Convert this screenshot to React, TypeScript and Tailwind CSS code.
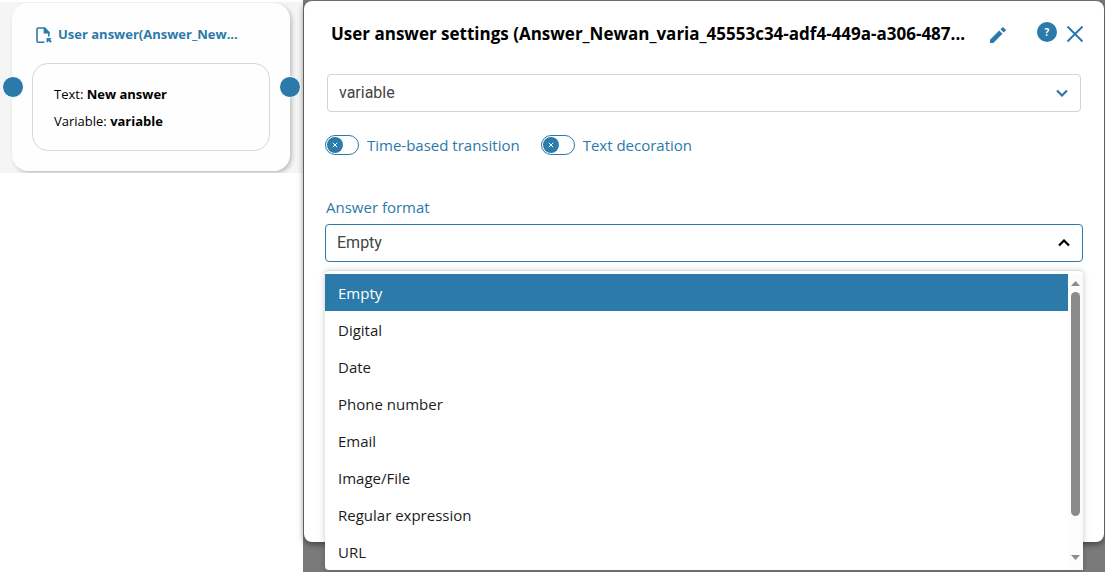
import { useState } from "react";

const FORMATS = [
  "Empty",
  "Digital",
  "Date",
  "Phone number",
  "Email",
  "Image/File",
  "Regular expression",
  "URL",
];

function Toggle({ label }: { label: string }) {
  const [on, setOn] = useState(false);

  return (
    <label className="flex cursor-pointer items-center gap-2 text-[15px] leading-5 text-[#2b7aa9]">
      <span className="relative flex h-5 w-[34px] items-center rounded-full border border-[#2b7aa9] bg-white px-px">
        <input
          type="checkbox"
          checked={on}
          onChange={(e) => setOn(e.target.checked)}
          className="absolute inset-0 cursor-pointer appearance-none"
        />
        <span
          className={
            on
              ? "pointer-events-none ml-auto flex size-4 items-center justify-center rounded-full bg-[#2b7aa9]"
              : "pointer-events-none flex size-4 items-center justify-center rounded-full bg-[#2b7aa9]"
          }
        >
          <svg width="6" height="6" viewBox="0 0 6 6" fill="none" stroke="#fff">
            <path d={on ? "M.5 3l2 2 3-4" : "M.8.8l4.400 4.400M5.200.8L.8 5.200"} />
          </svg>
        </span>
      </span>
      {label}
    </label>
  );
}

function AnswerNode() {
  return (
    <div className="relative mr-[13px] ml-3 h-[168px] rounded-2xl bg-[#fefefe] px-5 pt-5 shadow-[2px_2px_4px_rgba(0,0,0,0.22)]">
      <div className="flex h-6 items-center gap-1.5 pl-1">
        <svg width="16" height="17" viewBox="0 0 16 17" fill="none" className="shrink-0">
          <path
            d="M8.500 15.200H2.200a1.200 1.200 0 0 1-1.200-1.200V2.200A1.200 1.200 0 0 1 2.200 1h6.300l4.300 4.300v4.200"
            stroke="#2b7aa9"
            strokeWidth="1.6"
          />
          <path d="M7.600.6h1.200l4.800 5v1H7.600z" fill="#2b7aa9" />
          <path d="M10.600 11h4.400v1.300h-1.200l1.900 2.300-1.200 1.200-2.300-2v1.400h-1.600z" fill="#2b7aa9" />
        </svg>
        <h2 className="text-[13px] font-bold whitespace-nowrap text-[#2b7aa9]">
          User answer(Answer_New...
        </h2>
      </div>

      <div className="mt-4 rounded-2xl border border-[#d6d6d6] px-[21px] py-4 text-[13px] text-black">
        <p className="leading-7">
          Text: <b>New answer</b>
        </p>
        <p className="leading-[26px]">
          Variable: <b>variable</b>
        </p>
      </div>

      {/* Connection points */}
      <span className="absolute top-[73px] -left-[10px] size-[22px] rounded-full border border-white bg-[#2b7aa9]" />
      <span className="absolute top-[73px] -right-[11px] size-[22px] rounded-full border border-white bg-[#2b7aa9]" />
    </div>
  );
}

function FormatMenu({ value, onSelect }: { value: string; onSelect: (v: string) => void }) {
  return (
    <div className="absolute inset-x-0 top-full mt-2 flex rounded border-t border-[#dddddd] bg-white pt-[3px] shadow-[0_1px_6px_rgba(0,0,0,0.22)]">
      <ul role="listbox" aria-label="Answer format" className="min-w-0 flex-1">
        {FORMATS.map((f) => (
          <li key={f} role="option" aria-selected={f === value}>
            <button
              type="button"
              onClick={() => onSelect(f)}
              className={
                f === value
                  ? "block h-[37px] w-full bg-[#2b7aa9] px-[13px] pt-0.5 text-left text-[15px] text-white"
                  : "block h-[37px] w-full px-[13px] pt-0.5 text-left text-[15px] text-[#1c1c1c]"
              }
            >
              {f}
            </button>
          </li>
        ))}
      </ul>

      {/* Scrollbar */}
      <div className="flex w-[15px] flex-col items-center gap-1 bg-[#fcfcfc] pt-1.5 pb-2">
        <svg width="9" height="8" viewBox="0 0 9 8" fill="#8b8b8b">
          <path d="M4.500 1L9 6H0z" />
        </svg>
        <div className="h-56 w-[9px] rounded-full bg-[#8b8b8b]" />
        <svg width="9" height="8" viewBox="0 0 9 8" fill="#8b8b8b" className="mt-auto">
          <path d="M0 1h9L4.500 6z" />
        </svg>
      </div>
    </div>
  );
}

export default function App() {
  const [format, setFormat] = useState("Empty");
  const [open, setOpen] = useState(true);

  return (
    <div className="flex min-h-screen bg-white font-['Open_Sans','Noto_Sans',sans-serif]">
      {/* Canvas */}
      <div className="w-[303px] shrink-0">
        <div className="overflow-hidden border-t-2 border-white bg-[#f5f5f5] pt-px pb-0.5">
          <AnswerNode />
        </div>
      </div>

      {/* Settings dialog */}
      <div className="flex min-w-0 flex-1 bg-[#7a7a7a] px-px pt-px pb-[30px]">
        <section
          role="dialog"
          aria-labelledby="dialog-title"
          className="min-w-0 flex-1 rounded-lg bg-white px-[21px] pt-[21px] shadow-[0_2px_6px_rgba(0,0,0,0.5)]"
        >
          <header className="flex h-6 items-center">
            <h1
              id="dialog-title"
              className="ml-1.5 min-w-0 truncate text-[17px] font-bold text-black"
            >
              User answer settings (Answer_Newan_varia_45553c34-adf4-449a-a306-487...
            </h1>
            <button type="button" aria-label="Edit name" className="mt-0.5 ml-6 shrink-0">
              <svg width="18" height="18" viewBox="0 0 18 18" fill="#2b7aa9">
                <path d="M1 13.700V17h3.300l9.200-9.200-3.300-3.300zM16.600 4.700a.9.9 0 0 0 0-1.200l-2.100-2.100a.9.9 0 0 0-1.200 0l-1.900 1.900 3.300 3.300z" />
              </svg>
            </button>
            <button
              type="button"
              aria-label="Help"
              className="mr-2.5 mb-1 ml-auto flex size-5 shrink-0 items-center justify-center rounded-full bg-[#2b7aa9] text-[10px] font-bold text-white"
            >
              ?
            </button>
            <button type="button" aria-label="Close" className="shrink-0">
              <svg width="16" height="16" viewBox="0 0 16 16" stroke="#2b7aa9" strokeWidth="2">
                <path d="M.5.5l15 15M15.500.5l-15 15" />
              </svg>
            </button>
          </header>

          <div className="relative mx-0.5 mt-7">
            <select
              aria-label="Variable"
              className="block h-[38px] w-full appearance-none rounded border border-[#d2d2d2] bg-white px-[11px] font-[Roboto,sans-serif] text-base text-[#444444]"
            >
              <option>variable</option>
            </select>
            <svg
              width="12"
              height="8"
              viewBox="0 0 12 8"
              fill="none"
              className="pointer-events-none absolute top-[15px] right-[13px]"
            >
              <path d="M1 1.500l5 5 5-5" stroke="#2b7aa9" strokeWidth="2.200" />
            </svg>
          </div>

          <div className="mt-[23px] flex gap-[21px]">
            <Toggle label="Time-based transition" />
            <Toggle label="Text decoration" />
          </div>

          <label htmlFor="format" className="mt-10 block pl-px text-[15px] leading-6 text-[#2b7aa9]">
            Answer format
          </label>
          <div className="relative mt-[5px]">
            <select
              id="format"
              value={format}
              onChange={(e) => setFormat(e.target.value)}
              onMouseDown={(e) => {
                e.preventDefault();
                setOpen(!open);
              }}
              className="block h-[38px] w-full appearance-none rounded border border-[#2b7aa9] bg-white px-[11px] font-[Roboto,sans-serif] text-base text-[#444444]"
            >
              {FORMATS.map((f) => (
                <option key={f}>{f}</option>
              ))}
            </select>
            <svg
              width="12"
              height="8"
              viewBox="0 0 12 8"
              fill="none"
              className="pointer-events-none absolute top-[15px] right-[13px]"
            >
              <path d="M1 6.500l5-5 5 5" stroke="#000" strokeWidth="2.200" />
            </svg>
            {open && (
              <FormatMenu
                value={format}
                onSelect={(f) => {
                  setFormat(f);
                  setOpen(false);
                }}
              />
            )}
          </div>
        </section>
      </div>
    </div>
  );
}
